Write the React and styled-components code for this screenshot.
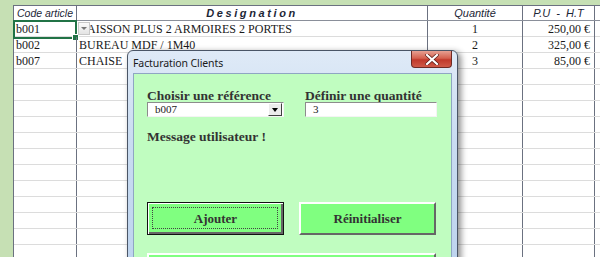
import React from "react";
import styled, { createGlobalStyle } from "styled-components";

const Global = createGlobalStyle`
  html, body { margin: 0; padding: 0; }
  body { width: 600px; height: 257px; overflow: hidden; background: #c6e0b4; }
`;

const Page = styled.div`
  position: relative;
  width: 600px;
  height: 257px;
  overflow: hidden;
  background: #c6e0b4;
  padding: 5px 0 0 13px;
  box-sizing: border-box;
`;

const Sheet = styled.div`
  background: #fff;
  border-top: 1px solid #6b7180;
  border-left: 1px solid #6b7180;
  height: 100%;
`;

const COLS = "63px 351px 95px 72px 1fr";

const HeaderRow = styled.div`
  display: grid;
  grid-template-columns: ${COLS};
  height: 14px;
  border-bottom: 1px solid #8a8f9a;
`;

const HeadCell = styled.div`
  border-right: 1px solid #6b7180;
  font-family: "Liberation Sans", Arial, sans-serif;
  font-style: italic;
  font-weight: ${(p) => (p.$bold ? 700 : 400)};
  font-size: ${(p) => p.$size || "11px"};
  letter-spacing: ${(p) => p.$spacing || "0"};
  color: #1c2636;
  text-align: ${(p) => p.$align || "center"};
  padding-left: ${(p) => (p.$align === "left" ? "3px" : "0")};
  line-height: 14px;
  white-space: nowrap;
  overflow: hidden;
  &:last-child { border-right: none; }
`;

const Row = styled.div`
  display: grid;
  grid-template-columns: ${COLS};
  height: 15px;
  border-bottom: 1px solid #dcdcdc;
`;

const Cell = styled.div`
  position: relative;
  border-right: 1px solid #6b7180;
  font-family: "Liberation Serif", "Times New Roman", serif;
  font-size: 12px;
  color: #1a1a1a;
  line-height: 16px;
  white-space: nowrap;
  overflow: ${(p) => (p.$visible ? "visible" : "hidden")};
  text-align: ${(p) => p.$align || "left"};
  padding: ${(p) =>
    p.$align === "right" ? "0 4px 0 0" : p.$align === "center" ? "0" : "0 0 0 2px"};
  &:last-child { border-right: none; }
`;

const Selection = styled.div`
  position: absolute;
  left: -1px;
  top: -1px;
  right: -1px;
  bottom: -2px;
  border: 2px solid #217346;
  pointer-events: none;
  &::after {
    content: "";
    position: absolute;
    right: -4px;
    bottom: -4px;
    width: 5px;
    height: 5px;
    background: #217346;
    border: 1px solid #fff;
  }
`;

const DropBtn = styled.div`
  position: absolute;
  left: 1px;
  top: 1px;
  width: 12px;
  height: 13px;
  background: linear-gradient(#fafafa, #e4e4e4);
  border: 1px solid #c8c8c8;
  box-sizing: border-box;
  display: flex;
  align-items: center;
  justify-content: center;
  z-index: 1;
  &::after {
    content: "";
    border-left: 3px solid transparent;
    border-right: 3px solid transparent;
    border-top: 3px solid #777;
  }
`;

const Dialog = styled.div`
  position: absolute;
  left: 127px;
  top: 50px;
  width: 331px;
  height: 230px;
  box-sizing: border-box;
  border: 1px solid #4a5566;
  border-radius: 6px 6px 0 0;
  background: linear-gradient(180deg, #dfeaf7 0%, #c9dcf1 40%, #bcd3ee 100%);
  box-shadow: 3px 2px 6px rgba(0, 0, 0, 0.45);
  padding: 0 5px;
`;

const TitleBar = styled.div`
  position: relative;
  height: 22px;
  display: flex;
  align-items: center;
  padding-top: 1px;
  box-sizing: border-box;
`;

const Title = styled.span`
  font-family: "Noto Sans", "Open Sans", sans-serif;
  font-size: 10.5px;
  color: #1a1a1a;
  letter-spacing: -0.1px;
`;

const CloseBtn = styled.div`
  position: absolute;
  right: 0px;
  top: 0px;
  width: 41px;
  height: 17px;
  box-sizing: border-box;
  border: 1px solid #6e2a24;
  border-top: none;
  border-radius: 0 0 4px 4px;
  background: linear-gradient(180deg, #e6a092 0%, #d4614f 45%, #c0392b 55%, #cf5a48 100%);
  display: flex;
  align-items: center;
  justify-content: center;
`;

const Client = styled.div`
  background: #c0fdc0;
  border: 1px solid #8fa6c2;
  height: 200px;
  padding: 15px 0 0 13px;
  box-sizing: border-box;
`;

const FieldRow = styled.div`
  display: flex;
  gap: 21px;
`;

const Field = styled.div`
  display: flex;
  flex-direction: column;
  width: ${(p) => p.$w}px;
`;

const Label = styled.div`
  font-family: "Liberation Serif", "Times New Roman", serif;
  font-weight: 700;
  font-size: 13.5px;
  line-height: 13px;
  color: #333;
  white-space: nowrap;
`;

const InputBox = styled.div`
  position: relative;
  height: 15px;
  background: #fff;
  box-sizing: border-box;
  border: 1px solid;
  border-color: #8c8c8c #f4f4f4 #f4f4f4 #8c8c8c;
  font-family: "Liberation Serif", "Times New Roman", serif;
  font-size: 11px;
  line-height: 13px;
  padding-left: 7px;
  color: #222;
`;

const ComboArrow = styled.div`
  position: absolute;
  right: 1px;
  top: 0px;
  width: 14px;
  height: 13px;
  box-sizing: border-box;
  background: #ececec;
  border: 1px solid;
  border-color: #fff #404040 #404040 #fff;
  display: flex;
  align-items: center;
  justify-content: center;
  &::after {
    content: "";
    border-left: 3px solid transparent;
    border-right: 3px solid transparent;
    border-top: 4px solid #000;
  }
`;

const Message = styled(Label)`
  margin-top: 13px;
`;

const ButtonRow = styled.div`
  display: flex;
  gap: 15px;
  margin-top: 59px;
`;

const Button = styled.div`
  width: ${(p) => p.$w}px;
  height: 33px;
  box-sizing: border-box;
  background: #80ff80;
  font-family: "Liberation Serif", "Times New Roman", serif;
  font-weight: 700;
  font-size: 13px;
  color: #333;
  display: flex;
  align-items: center;
  justify-content: center;
  position: relative;
  border: ${(p) => (p.$default ? "1px solid #111" : "2px solid")};
  border-color: ${(p) => (p.$default ? "#111" : "#fff #666 #666 #fff")};
  box-shadow: ${(p) =>
    p.$default ? "inset 1px 1px 0 #fff, inset -2px -2px 0 #666" : "none"};
  &::before {
    content: "";
    display: ${(p) => (p.$default ? "block" : "none")};
    position: absolute;
    left: 4px;
    top: 4px;
    right: 5px;
    bottom: 5px;
    border: 1px dotted #444;
  }
`;

const WideButton = styled(Button)`
  margin-top: 18px;
`;

const rows = [
  { code: "b001", des: "CAISSON PLUS 2 ARMOIRES 2 PORTES", q: "1", p: "250,00 €", sel: true },
  { code: "b002", des: "BUREAU MDF / 1M40", q: "2", p: "325,00 €" },
  { code: "b007", des: "CHAISE", q: "3", p: "85,00 €" },
];

export default function App() {
  const empties = Array.from({ length: 13 });
  return (
    <>
      <Global />
      <Page>
        <Sheet>
          <HeaderRow>
            <HeadCell $align="left" $size="10.5px">Code article</HeadCell>
            <HeadCell $bold $spacing="2.6px">Designation</HeadCell>
            <HeadCell>Quantité</HeadCell>
            <HeadCell>P.U&nbsp;&nbsp;-&nbsp;&nbsp;H.T</HeadCell>
            <HeadCell />
          </HeaderRow>
          {rows.map((r) => (
            <Row key={r.code}>
              <Cell $visible={r.sel}>
                {r.code}
                {r.sel && <Selection />}
              </Cell>
              <Cell>
                {r.des}
                {r.sel && <DropBtn />}
              </Cell>
              <Cell $align="center">{r.q}</Cell>
              <Cell $align="right">{r.p}</Cell>
              <Cell />
            </Row>
          ))}
          {empties.map((_, i) => (
            <Row key={i}>
              <Cell />
              <Cell />
              <Cell />
              <Cell />
              <Cell />
            </Row>
          ))}
        </Sheet>

        <Dialog>
          <TitleBar>
            <Title>Facturation Clients</Title>
            <CloseBtn>
              <svg width="14" height="11" viewBox="0 0 14 11">
                <path
                  d="M2 1 L12 10 M12 1 L2 10"
                  stroke="#5a1a14"
                  strokeWidth="3.6"
                  strokeLinecap="square"
                  fill="none"
                />
                <path
                  d="M2 1 L12 10 M12 1 L2 10"
                  stroke="#fff"
                  strokeWidth="2.2"
                  strokeLinecap="square"
                  fill="none"
                />
              </svg>
            </CloseBtn>
          </TitleBar>
          <Client>
            <FieldRow>
              <Field $w={137}>
                <Label>Choisir une référence</Label>
                <InputBox>
                  b007
                  <ComboArrow />
                </InputBox>
              </Field>
              <Field $w={132}>
                <Label>Définir une quantité</Label>
                <InputBox>3</InputBox>
              </Field>
            </FieldRow>
            <Message>Message utilisateur !</Message>
            <ButtonRow>
              <Button $w={137} $default>Ajouter</Button>
              <Button $w={137}>Réinitialiser</Button>
            </ButtonRow>
            <WideButton $w={289} />
          </Client>
        </Dialog>
      </Page>
    </>
  );
}
